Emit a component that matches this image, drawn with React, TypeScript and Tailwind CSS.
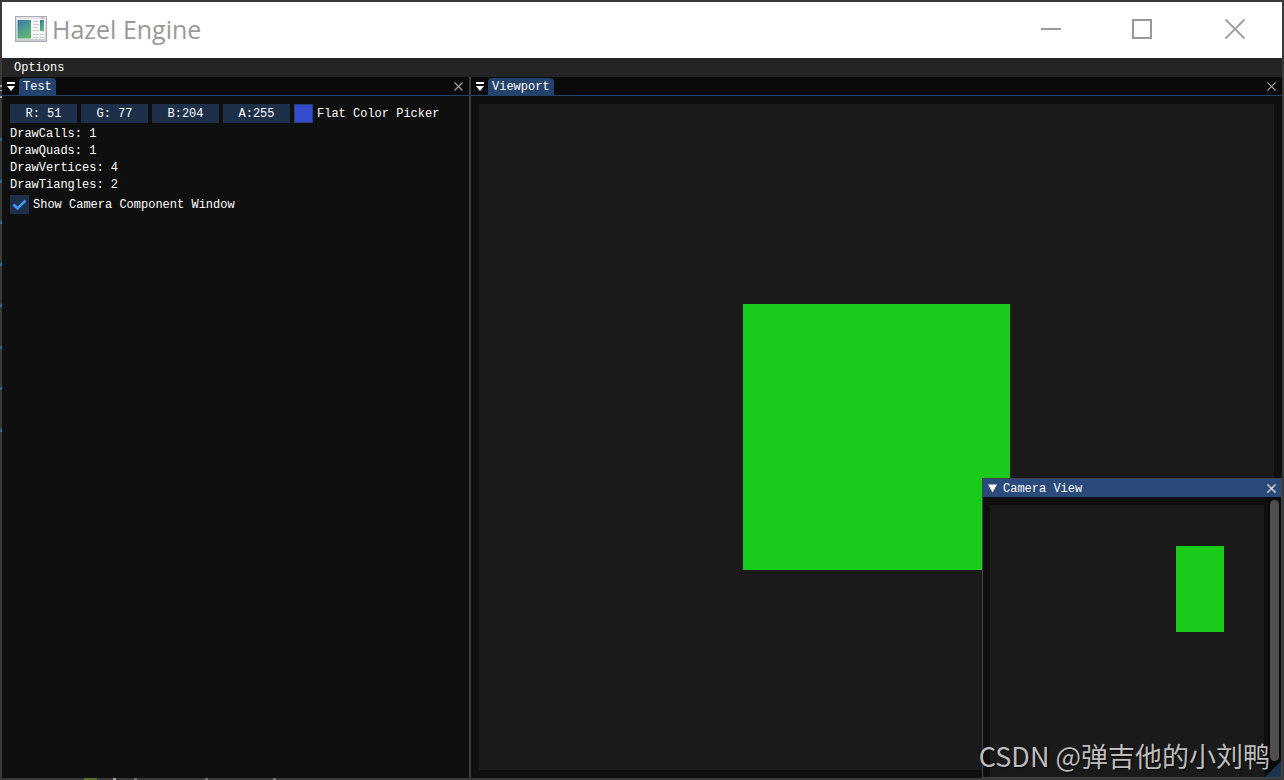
import { useState } from "react";
import type { ReactNode } from "react";

const MONO = "font-['Liberation_Mono','DejaVu_Sans_Mono',monospace]";

function AppIcon() {
  return (
    <svg width="32" height="26" viewBox="0 0 32 26" aria-hidden="true">
      <defs>
        <linearGradient id="pane" x1="0" y1="0" x2="0.6" y2="1">
          <stop offset="0" stopColor="#3b73a3" />
          <stop offset="0.5" stopColor="#4b9a92" />
          <stop offset="1" stopColor="#5fb56b" />
        </linearGradient>
        <linearGradient id="frame" x1="0" y1="0" x2="0" y2="1">
          <stop offset="0" stopColor="#e3e5e7" />
          <stop offset="1" stopColor="#c9cccf" />
        </linearGradient>
      </defs>
      <rect x="0.5" y="0.5" width="31" height="25" fill="url(#frame)" stroke="#a9adb3" />
      <path d="M26 2h3" stroke="#b98f86" />
      <rect x="2" y="3" width="28" height="20" fill="#f4f5f5" />
      <rect x="2.500" y="4" width="13.500" height="18.500" fill="url(#pane)" />
      <path d="M18 5.500h5M18 8.500h6M18 11.500h5M18 14.500h6M18 18.500h6M18 21.500h5M25 18.500h4M25 21.500h4" stroke="#c9cccf" />
      <rect x="25" y="4" width="4" height="11" fill="url(#pane)" />
    </svg>
  );
}

function SmallCross({ color }: { color: string }) {
  return (
    <svg width="9" height="9" viewBox="0 0 9 9" aria-hidden="true">
      <path d="M0.5 0.5l8 8M8.5 0.5l-8 8" stroke={color} strokeWidth="1.2" />
    </svg>
  );
}

function DesktopEdges() {
  const ticks = [140, 182, 223, 265, 306, 348, 389, 431];
  return (
    <>
      <svg width="2" height="440" className="absolute left-0 top-0" aria-hidden="true">
        <path d="M0 85h2v2H0zM0 90h2v1H0zM0 96h2v2H0z" fill="#a0a0a0" />
        {ticks.map((y) => (
          <path key={y} d={`M2 ${y - 3}v4H0v-2z`} fill="#2f6f92" />
        ))}
      </svg>
      <svg width="300" height="2" className="absolute bottom-0 left-0" aria-hidden="true">
        <path d="M84 0h13v2H84z" fill="#55752a" />
        <path d="M113 0h3v2h-3z" fill="#a8a8a8" />
        <path d="M134 0h3v2h-3zM205 0h3v2h-3zM273 0h3v2h-3z" fill="#747474" />
      </svg>
    </>
  );
}

function DockPanel({ title, className, children }: { title: string; className: string; children: ReactNode }) {
  return (
    <section className={`flex min-w-0 flex-col bg-[#0f0f0f] ${className}`}>
      <header className="flex h-[19px] shrink-0 items-end border-b border-[#23436c] bg-[#0a0a0a]">
        <button type="button" aria-label={`${title} tab list`} className="flex h-full w-[17px] items-center justify-center">
          <svg width="8" height="9" viewBox="0 0 8 9" aria-hidden="true">
            <path d="M0 0h8v2H0zM0 4h8L4 9z" fill="#fff" />
          </svg>
        </button>
        <button type="button" className="h-[17px] rounded-t-[4px] bg-[#23436c] px-1 pt-[2px] leading-[15px]">
          {title}
        </button>
        <button type="button" aria-label={`Close ${title}`} className="ml-auto mr-[6px] flex h-full items-center">
          <SmallCross color="#a0a0a0" />
        </button>
      </header>
      {children}
    </section>
  );
}

const channels = ["R: 51", "G: 77", "B:204", "A:255"];
const stats = ["DrawCalls: 1", "DrawQuads: 1", "DrawVertices: 4", "DrawTiangles: 2"];

export default function App() {
  const [showCamera, setShowCamera] = useState(true);

  return (
    <div className={`relative flex h-screen flex-col overflow-hidden bg-[#3a3a3a] p-[2px] text-[12px] leading-[13px] text-white ${MONO}`}>
      <DesktopEdges />
      <header className="flex h-14 shrink-0 items-center bg-white pb-[2px] pl-[13px] text-[#999]">
        <AppIcon />
        <h1 className="ml-[5px] font-['Open_Sans','Noto_Sans',sans-serif] text-[25px] leading-8">Hazel Engine</h1>
        <div className="ml-auto flex h-full">
          <button type="button" aria-label="Minimize" className="flex w-[90px] items-center justify-center">
            <svg width="20" height="20" aria-hidden="true">
              <path d="M0 10h20" stroke="#999" strokeWidth="2" />
            </svg>
          </button>
          <button type="button" aria-label="Maximize" className="flex w-[92px] items-center justify-center">
            <svg width="20" height="20" aria-hidden="true">
              <path d="M1 1h18v18H1z" fill="none" stroke="#999" strokeWidth="2" />
            </svg>
          </button>
          <button type="button" aria-label="Close" className="flex w-[94px] items-center justify-center">
            <svg width="20" height="20" aria-hidden="true">
              <path d="M0.500 0.500l19 19M19.500 0.500l-19 19" stroke="#999" strokeWidth="1.800" />
            </svg>
          </button>
        </div>
      </header>

      <nav className="flex h-[19px] shrink-0 items-center bg-[#242424] pl-3 pt-[2px]">
        <button type="button">Options</button>
      </nav>

      <main className="flex min-h-0 flex-1">
        <DockPanel title="Test" className="w-[467px] shrink-0">
          <div className="flex flex-col p-2">
            <div className="flex items-center gap-1">
              {channels.map((value) => (
                <input
                  key={value}
                  aria-label={`Channel ${value[0]}`}
                  defaultValue={value}
                  className="h-[19px] w-[67px] bg-[#1d2f49] text-center outline-none"
                />
              ))}
              <button type="button" aria-label="Flat Color Picker" className="size-[19px] border border-[#26407a] bg-[#334dcc]" />
              <span className="pt-[2px]">Flat Color Picker</span>
            </div>
            <ul className="mb-px mt-[3px] leading-[17px]">
              {stats.map((line) => (
                <li key={line}>{line}</li>
              ))}
            </ul>
            <label className="flex items-center gap-1">
              <span className="grid size-[19px]">
                <input
                  type="checkbox"
                  checked={showCamera}
                  onChange={(e) => setShowCamera(e.target.checked)}
                  className="col-start-1 row-start-1 size-[19px] appearance-none bg-[#1d2f49]"
                />
                {showCamera && (
                  <svg viewBox="0 0 19 19" className="pointer-events-none col-start-1 row-start-1 size-[19px]" aria-hidden="true">
                    <path d="M3.500 9.500l4 4L15.500 5.500" fill="none" stroke="#4296fa" strokeWidth="2.600" />
                  </svg>
                )}
              </span>
              <span className="pt-[2px]">Show Camera Component Window</span>
            </label>
          </div>
        </DockPanel>

        <div className="w-[2px] shrink-0 bg-[#3c3c44]" />

        <DockPanel title="Viewport" className="flex-1">
          <div className="flex min-h-0 flex-1 p-2">
            <div className="flex flex-1 items-center justify-center bg-[#1a1a1a]">
              <div className="h-[266px] w-[267px] bg-[#1acc1a]" />
            </div>
          </div>
        </DockPanel>
      </main>

      {showCamera && (
        <section className="absolute bottom-[2px] right-[2px] flex h-[300px] w-[300px] flex-col border border-[#42424c] bg-[#0f0f0f]">
          <header className="flex h-[18px] shrink-0 items-center bg-[#294a7a] px-[5px]">
            <button type="button" aria-label="Collapse Camera View">
              <svg width="9" height="9" viewBox="0 0 9 9" aria-hidden="true">
                <path d="M0 0.500h9L4.500 8.500z" fill="#fff" />
              </svg>
            </button>
            <h2 className="ml-[6px] pt-[2px]">Camera View</h2>
            <button type="button" aria-label="Close Camera View" onClick={() => setShowCamera(false)} className="ml-auto">
              <SmallCross color="#fff" />
            </button>
          </header>
          <div className="flex min-h-0 flex-1">
            <div className="flex flex-1 pl-[7px] pr-1 pt-2">
              <div className="relative flex-1 bg-[#1a1a1a]">
                <div className="absolute left-[186px] top-[41px] h-[86px] w-[48px] bg-[#1acc1a]" />
              </div>
            </div>
            <div className="flex w-[13px] flex-col bg-[#0a0a0a] px-[2px] pb-4 pt-[3px]">
              <div className="flex-1 rounded-full bg-[#4f4f4f]" />
            </div>
          </div>
          <svg width="16" height="16" className="absolute bottom-0 right-0" aria-hidden="true">
            <path d="M16 0v16H0z" fill="#1a3350" />
          </svg>
        </section>
      )}

      <p className="absolute bottom-2 right-[14px] whitespace-nowrap font-['Noto_Sans_CJK_SC',sans-serif] text-[27px] leading-8 text-[#bdbdbd] [text-shadow:1px_1px_1px_#000]">
        CSDN @弹吉他的小刘鸭
      </p>
    </div>
  );
}
